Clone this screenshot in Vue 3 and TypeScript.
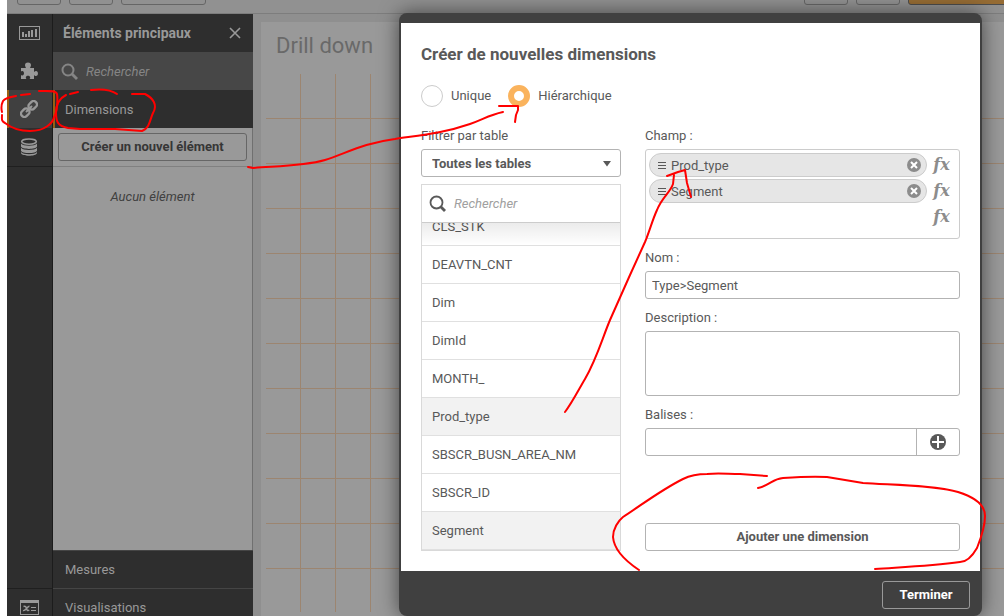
<script setup lang="ts">
import { ref } from 'vue'

interface FieldRow {
  name: string
  picked: boolean
}

const fields: FieldRow[] = [
  { name: 'CLS_STK', picked: false },
  { name: 'DEAVTN_CNT', picked: false },
  { name: 'Dim', picked: false },
  { name: 'DimId', picked: false },
  { name: 'MONTH_', picked: false },
  { name: 'Prod_type', picked: true },
  { name: 'SBSCR_BUSN_AREA_NM', picked: false },
  { name: 'SBSCR_ID', picked: false },
  { name: 'Segment', picked: true },
]

const chosen = ref<string[]>(['Prod_type', 'Segment'])
const kind = ref<'single' | 'drill'>('drill')
const name = ref('Type>Segment')
const description = ref('')
const tag = ref('')

function removeField(field: string): void {
  chosen.value = chosen.value.filter((f) => f !== field)
}
</script>

<template>
  <div class="page">
    <header class="topbar">
      <button class="tool" type="button" aria-label="Navigation"></button>
      <button class="tool" type="button" aria-label="Menu"></button>
      <button class="tool wide" type="button" aria-label="Enregistrer"></button>
      <span class="spacer"></span>
      <button class="tool" type="button" aria-label="Annuler"></button>
      <button class="tool" type="button" aria-label="Rétablir"></button>
      <button class="tool accent" type="button" aria-label="Terminer l'édition"></button>
    </header>

    <div class="shell">
      <nav class="rail">
        <button class="rail-item" type="button" aria-label="Graphiques">
          <svg width="21" height="14" viewBox="0 0 21 14">
            <rect x=".5" y=".5" width="20" height="13" fill="none" stroke="#999" />
            <path d="M3 6h2v5H3zM6 8h2v3H6zM9 5h2v6H9zM12 4h2v7h-2zM16 3h2v8h-2z" fill="#999" />
          </svg>
        </button>
        <button class="rail-item" type="button" aria-label="Objets personnalisés">
          <svg width="18" height="18" viewBox="0 0 18 18">
            <g fill="#999">
              <path d="M1 6h13v11H1z" />
              <path d="M6 7c.4-1.500-1-2-1-4 0-3.300 6-3.300 6 0 0 2-1.400 2.500-1 4z" />
              <path d="M13 10c1.500.4 1.500-1 3-1 2.600 0 2.600 5 0 5-1.500 0-1.500-1.400-3-1z" />
            </g>
            <g fill="#2e2e2e">
              <path d="M0 9.500c1.500.4 1.200-.5 2.300-.5 2.300 0 2.300 4.500 0 4.500-1.100 0-.8-.9-2.300-.5z" />
              <path d="M6.500 18c.4-1.500-.7-1.300-.7-2.500 0-2.200 4.400-2.200 4.400 0 0 1.200-1.100 1-.7 2.500z" />
            </g>
          </svg>
        </button>
        <button class="rail-item active" type="button" aria-label="Éléments principaux">
          <svg width="18" height="18" viewBox="0 0 18 18">
            <g fill="none" stroke="#999" stroke-width="2.400" transform="rotate(-45 9 9)">
              <rect x="-.8" y="5.700" width="9" height="6.600" rx="3" />
              <rect x="9.800" y="5.700" width="9" height="6.600" rx="3" />
              <path d="M5.500 9h7" stroke-width="2" stroke-linecap="round" />
            </g>
          </svg>
        </button>
        <button class="rail-item last" type="button" aria-label="Champs">
          <svg width="18" height="18" viewBox="0 0 18 18">
            <ellipse cx="9" cy="3.600" rx="7.300" ry="2.600" fill="none" stroke="#999" stroke-width="1.600" />
            <path d="M1 5.500c2 3 14 3 16 0v3c-1 3.200-15 3.200-16 0zM1 9.700c2 3 14 3 16 0v3c-1 3.200-15 3.200-16 0zM1 13.900c2 3 14 3 16 0V15c-1 3.700-15 3.700-16 0z" fill="#999" />
          </svg>
        </button>
        <span class="rail-fill"></span>
        <button class="rail-item bottom" type="button" aria-label="Variables">
          <svg width="19" height="15" viewBox="0 0 19 15">
            <rect x=".5" y=".5" width="18" height="14" fill="none" stroke="#999" />
            <path d="M0 0h19v3H0zM11 7h5v1h-5zM11 10h5v1h-5z" fill="#999" />
            <path d="M3.500 6.500c2-.6 2.500.2 3 2s1.200 2.600 2.800 1.500M9.500 6.300C7.500 6 5.500 11.500 3 10.500" fill="none" stroke="#999" stroke-width="1.400" />
          </svg>
        </button>
      </nav>

      <aside class="panel">
        <div class="panel-head">
          <h2>Éléments principaux</h2>
          <button class="close" type="button" aria-label="Fermer">
            <svg width="12" height="12" viewBox="0 0 12 12">
              <path d="M1 1l10 10M11 1L1 11" stroke="#999" stroke-width="1.600" />
            </svg>
          </button>
        </div>
        <label class="panel-search">
          <svg width="17" height="17" viewBox="0 0 17 17">
            <circle cx="7" cy="7" r="5.500" fill="none" stroke="#858585" stroke-width="2" />
            <path d="M11 11l5 5" stroke="#858585" stroke-width="2.800" />
          </svg>
          <input type="search" placeholder="Rechercher" aria-label="Rechercher un élément" />
        </label>
        <button class="section open" type="button">Dimensions</button>
        <div class="panel-create">
          <button class="create" type="button">Créer un nouvel élément</button>
        </div>
        <p class="empty">Aucun élément</p>
        <button class="section" type="button">Mesures</button>
        <button class="section" type="button">Visualisations</button>
      </aside>

      <main class="canvas">
        <div class="sheet">
          <h1>Drill down</h1>
          <div class="grid-lines">
            <svg width="100%" height="100%">
              <defs>
                <pattern id="grid-h" width="45" height="45" patternUnits="userSpaceOnUse">
                  <path d="M0 44h45v1H0z" />
                </pattern>
                <pattern id="grid-v" width="35" height="45" patternUnits="userSpaceOnUse">
                  <path d="M34 0h1v45h-1z" />
                </pattern>
              </defs>
              <rect width="100%" height="100%" fill="url(#grid-h)" />
              <rect width="98%" height="100%" fill="url(#grid-v)" />
            </svg>
          </div>
        </div>
      </main>
    </div>

    <div class="overlay">
      <section class="dialog" role="dialog" aria-labelledby="dialog-title">
        <form class="dialog-body" @submit.prevent>
          <h2 id="dialog-title">Créer de nouvelles dimensions</h2>
          <div class="kinds">
            <label><input v-model="kind" type="radio" name="kind" value="single" />Unique</label>
            <label><input v-model="kind" type="radio" name="kind" value="drill" />Hiérarchique</label>
          </div>

          <div class="columns">
            <div class="left">
              <label class="caption" for="table-filter">Filtrer par table</label>
              <div class="select-wrap">
                <select id="table-filter">
                  <option>Toutes les tables</option>
                </select>
                <svg class="caret" width="8" height="6" viewBox="0 0 8 6">
                  <path d="M0 0h8L4 5.500z" fill="#595959" />
                </svg>
              </div>
              <div class="list-box">
                <label class="list-search">
                  <svg width="17" height="17" viewBox="0 0 17 17">
                    <circle cx="7.500" cy="7.500" r="6" fill="none" stroke="#595959" stroke-width="1.800" />
                    <path d="M11.500 11.500l4.500 4.500" stroke="#595959" stroke-width="2.800" />
                  </svg>
                  <input type="search" placeholder="Rechercher" aria-label="Rechercher un champ" />
                </label>
                <ul class="rows">
                  <li v-for="f in fields" :key="f.name" :class="{ picked: f.picked }">{{ f.name }}</li>
                </ul>
              </div>
            </div>

            <div class="right">
              <span class="caption">Champ :</span>
              <div class="field-box">
                <div v-for="c in chosen" :key="c" class="field-line">
                  <div class="pill">
                    <svg width="8" height="7" viewBox="0 0 8 7">
                      <path d="M0 .5h8M0 3.500h8M0 6.500h8" stroke="#595959" />
                    </svg>
                    <span>{{ c }}</span>
                    <button type="button" :aria-label="'Supprimer ' + c" @click="removeField(c)">
                      <svg width="14" height="14" viewBox="0 0 14 14">
                        <circle cx="7" cy="7" r="7" fill="#8c8c8c" />
                        <path d="M4 4l6 6M10 4l-6 6" stroke="#fff" stroke-width="2" />
                      </svg>
                    </button>
                  </div>
                  <button class="fx" type="button">fx</button>
                </div>
                <div class="field-line">
                  <button class="fx" type="button">fx</button>
                </div>
              </div>

              <label class="caption" for="dim-name">Nom :</label>
              <input id="dim-name" v-model="name" class="text" type="text" />

              <label class="caption" for="dim-desc">Description :</label>
              <textarea id="dim-desc" v-model="description" class="text area"></textarea>

              <label class="caption" for="dim-tag">Balises :</label>
              <div class="tag-line">
                <input id="dim-tag" v-model="tag" class="text" type="text" />
                <button type="button" aria-label="Ajouter une balise">
                  <svg width="16" height="16" viewBox="0 0 16 16">
                    <circle cx="8" cy="8" r="8" fill="#595959" />
                    <path d="M8 2v12M2 8h12" stroke="#fff" stroke-width="2" />
                  </svg>
                </button>
              </div>

              <button class="add" type="button">Ajouter une dimension</button>
            </div>
          </div>
        </form>
        <footer class="dialog-foot">
          <button type="button">Terminer</button>
        </footer>
      </section>
    </div>

    <svg class="marks" width="1004" height="616" viewBox="0 0 1004 616" aria-hidden="true">
      <g fill="none" stroke="#f00" stroke-width="2" stroke-linecap="round" stroke-linejoin="round">
        <path d="M30 94l-9 1M16 96C10 97 5 98 3 101c-2 4-2 7-1 11M2 115c0 4-1 6 3 8 5 4 12 8 25 8 15 0 23-8 24-14 3-5 4-17 3-23-1-4-9-3-18-3" />
        <path d="M78 92l-8 2M66 95c-8 4-10 11-10 18 0 9 2 13 12 15l12 1h35l27 2c8-3 8-12 11-18 5-8 0-15-8-19h-13M117 94c-7-5-17-5-26-4" />
        <path d="M248 167l5 1c27-2 51-2 72-8 20-6 38-17 70-21 27-4 49-6 75-15 14-5 19-9 33-12M499 106h19v4l-2 5-1 7" />
        <path d="M565 412c7-9 14-23 20-33 12-21 17-40 25-59l20-45 15-33c5-12 7-21 12-32 5-13 13-17 16-26l1-9M667 176l11-4 7-2 2 13 4 14" />
        <path d="M758 488c13-3 14-9 25-10 14-1 30-2 44-1l36 6c27 2 72 2 95 9 13 4 27 11 27 24 0 11-4 22-8 32-4 7-10 14-17 14-29 4-56 5-85 7" />
        <path d="M767 476l-27-2c-12 0-22-1-33 0-10 0-18 2-24 5-22 11-40 25-60 38-5 4-10 12-10 20 1 13 14 25 26 33" />
      </g>
    </svg>
  </div>
</template>

<style>
html,
body {
  margin: 0;
  background: #fff;
}
</style>

<style scoped>
* {
  box-sizing: border-box;
}
.page {
  position: relative;
  height: 100vh;
  overflow: hidden;
  padding-left: 7px;
  font: 13px/18px Roboto, 'Liberation Sans', sans-serif;
  color: #595959;
}
button,
input,
select,
textarea {
  font: inherit;
  color: inherit;
  margin: 0;
  padding: 0;
  border: 0;
  background: none;
  outline: none;
}
h1,
h2,
p,
ul {
  margin: 0;
  padding: 0;
}
svg {
  display: block;
  flex: none;
}

/* Top toolbar */
.topbar {
  display: flex;
  align-items: flex-end;
  gap: 8px;
  height: 14px;
  padding: 0 0 8px 10px;
  overflow: hidden;
  background: #919191;
  border-bottom: 1px solid #7d7d7d;
}
.tool {
  flex: none;
  width: 44px;
  height: 28px;
  border: 1px solid #666;
  border-radius: 3px;
}
.wide {
  width: 85px;
}
.accent {
  width: 110px;
  margin-right: -14px;
  background: #966c34;
  border-color: #4d4d4d;
}
.spacer {
  flex: 1;
}

.shell {
  display: grid;
  grid-template-columns: 46px 200px 1fr;
  height: calc(100vh - 4px);
}

/* Icon rail */
.rail {
  display: flex;
  flex-direction: column;
  background: #2e2e2e;
  border-right: 1px solid #1c1c1c;
}
.rail-item {
  display: flex;
  flex: none;
  align-items: center;
  justify-content: center;
  height: 38px;
  padding-right: 1px;
}
.rail-item.active {
  background: #404040;
  border-left: 2px solid #986012;
  padding-right: 3px;
}
.rail-item.last {
  height: 39px;
  border-bottom: 1px solid #1f1f1f;
}
.rail-item.bottom {
  border-top: 1px solid #1f1f1f;
}
.rail-fill {
  flex: 1;
}

/* Master items */
.panel {
  display: flex;
  flex-direction: column;
  background: #999;
  border-right: 1px solid #707070;
}
.panel > * {
  flex: none;
}
.panel-head,
.panel-search,
.section {
  margin-right: -1px;
}
.panel-head {
  display: flex;
  align-items: center;
  justify-content: space-between;
  height: 38px;
  padding: 0 12px 0 10px;
  background: #2e2e2e;
  color: #999;
}
.panel-head h2 {
  font-size: 14px;
  font-weight: 700;
}
.panel-search {
  display: flex;
  align-items: center;
  gap: 8px;
  height: 38px;
  padding: 0 8px;
  background: #474747;
}
.panel-search input,
.list-search input {
  flex: 1;
  min-width: 0;
  padding-top: 1px;
}
.panel-search input {
  color: #999;
}
input::placeholder {
  color: #858585;
  font-style: italic;
  opacity: 1;
}
.section {
  height: 38px;
  padding: 0 12px;
  text-align: left;
  color: #999;
  background: #2e2e2e;
  border-top: 1px solid #454545;
}
.section.open {
  padding: 1px 10px 0;
  border-top: 0;
  border-left: 2px solid #986012;
}
.panel-create {
  padding: 5px;
  border-bottom: 1px solid #808080;
}
.create {
  display: block;
  width: 100%;
  height: 28px;
  border: 1px solid #666;
  border-radius: 3px;
  font-weight: 700;
  color: #363636;
}
.panel > .empty {
  flex: 1;
  padding-top: 21px;
  text-align: center;
  font-style: italic;
  color: #404040;
}

/* Sheet */
.canvas {
  display: flex;
  padding: 8px 0 0 8px;
  background: #8f8f8f;
}
.sheet {
  display: flex;
  flex-direction: column;
  flex: 1;
  background: #999;
}
.sheet h1 {
  padding: 9px 15px 13px;
  font-size: 22px;
  line-height: 30px;
  font-weight: 400;
  color: #696969;
}
.grid-lines {
  flex: 1;
  min-height: 0;
  margin: 0 0 14px 5px;
}
.grid-lines pattern path {
  fill: #9c8570;
}

/* Dialog */
.overlay {
  position: absolute;
  inset: 0;
  display: flex;
  padding: 13px 22px 0 399px;
}
.dialog {
  display: flex;
  flex-direction: column;
  flex: 1;
  min-width: 0;
  padding: 10px 2px 0;
  background: #404040;
  border-radius: 8px;
  box-shadow: 0 0 20px rgba(0, 0, 0, 0.55);
}
.dialog-body {
  display: flex;
  flex-direction: column;
  flex: 1;
  min-height: 0;
  padding: 21px 20px 20px;
  background: #fff;
}
.dialog-body h2 {
  font-size: 17px;
  line-height: 20px;
  font-weight: 700;
}
.kinds {
  display: flex;
  gap: 17px;
  margin: 21px 0 20px;
}
.kinds label {
  display: flex;
  align-items: center;
  gap: 8px;
  height: 22px;
}
.kinds input {
  appearance: none;
  width: 22px;
  height: 22px;
  border: 1px solid #ccc;
  border-radius: 50%;
}
.kinds input:checked {
  border: 6px solid #fab35d;
}
.columns {
  display: grid;
  grid-template-columns: 200px 1fr;
  gap: 24px;
  flex: 1;
  min-height: 0;
}
.left,
.right {
  display: flex;
  flex-direction: column;
  min-width: 0;
  min-height: 0;
}
.caption {
  flex: none;
  height: 18px;
  margin-bottom: 4px;
}
.select-wrap {
  position: relative;
  flex: none;
  height: 28px;
}
.select-wrap select {
  appearance: none;
  width: 100%;
  height: 28px;
  padding: 1px 10px 0;
  border: 1px solid #b3b3b3;
  border-radius: 3px;
  font-weight: 700;
}
.caret {
  position: absolute;
  top: 12px;
  right: 10px;
  pointer-events: none;
}
.list-box {
  display: flex;
  flex-direction: column;
  flex: 1;
  min-height: 0;
  margin-top: 7px;
  border: 1px solid #d9d9d9;
}
.list-search {
  display: flex;
  flex: none;
  align-items: center;
  gap: 8px;
  height: 38px;
  padding: 0 7px;
  border-bottom: 1px solid #ccc;
}
.list-search input::placeholder {
  color: #a0a0a0;
}
.rows {
  position: relative;
  display: flex;
  flex-direction: column;
  justify-content: flex-end;
  flex: 1;
  min-height: 0;
  overflow: hidden;
  list-style: none;
}
.rows::before {
  content: '';
  position: absolute;
  inset: 0 0 auto;
  height: 22px;
  background: linear-gradient(rgba(0, 0, 0, 0.08), transparent);
}
.rows li {
  flex: none;
  height: 38px;
  padding: 0 10px;
  line-height: 37px;
  border-bottom: 1px solid #e0e0e0;
}
.rows li.picked {
  background: #f2f2f2;
}
.field-box {
  flex: none;
  height: 90px;
  margin-bottom: 10px;
  padding: 3px 8px 3px 3px;
  border: 1px solid #ccc;
  border-radius: 3px;
}
.field-line {
  display: flex;
  justify-content: flex-end;
  gap: 5px;
  height: 24px;
  margin-bottom: 2px;
}
.pill {
  display: flex;
  align-items: center;
  gap: 5px;
  flex: 1;
  padding: 0 5px 0 8px;
  background: #e6e6e6;
  border: 1px solid #ccc;
  border-radius: 12px;
}
.pill span {
  flex: 1;
  padding-top: 1px;
}
.fx {
  width: 19px;
  font: italic 700 16px/24px 'DejaVu Serif', 'Liberation Serif', serif;
  color: #8c8c8c;
}
.text {
  flex: none;
  height: 28px;
  margin-bottom: 10px;
  padding: 0 6px;
  border: 1px solid #b3b3b3;
  border-radius: 3px;
}
.area {
  height: 65px;
  padding: 5px 6px;
  resize: none;
}
.tag-line {
  display: flex;
  flex: none;
  height: 28px;
  border: 1px solid #b3b3b3;
  border-radius: 3px;
}
.tag-line .text {
  flex: 1;
  min-width: 0;
  height: 26px;
  margin: 0;
  border: 0;
}
.tag-line button {
  display: flex;
  align-items: center;
  justify-content: center;
  width: 43px;
  border-left: 1px solid #b3b3b3;
}
.add {
  flex: none;
  height: 28px;
  margin-top: auto;
  border: 1px solid #b3b3b3;
  border-radius: 3px;
  font-weight: 700;
}
.dialog-foot {
  display: flex;
  flex: none;
  justify-content: flex-end;
  padding: 10px 10px 7px;
}
.dialog-foot button {
  width: 88px;
  height: 28px;
  border: 1px solid #999;
  border-radius: 3px;
  font-weight: 700;
  color: #fff;
}

/* Hand-drawn annotations over the page */
.marks {
  position: absolute;
  inset: 0 auto auto 0;
  pointer-events: none;
}
</style>
